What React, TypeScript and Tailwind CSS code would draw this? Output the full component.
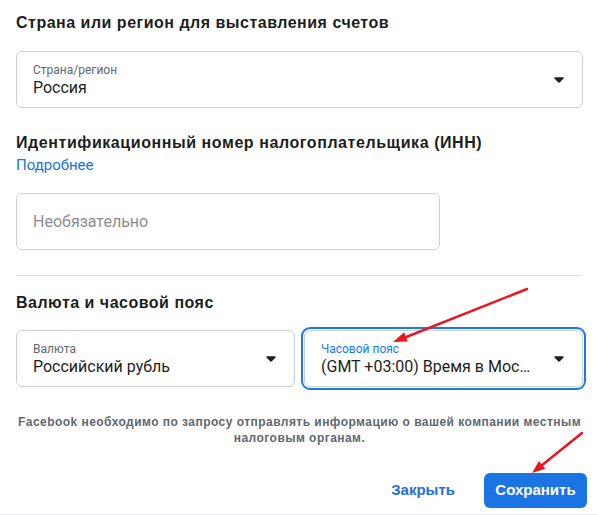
import React from 'react';

const Caret: React.FC = () => (
  <svg width="10" height="6" viewBox="0 0 10 6" className="shrink-0">
    <path d="M1 0.3h8a.8.8 0 0 1 .6 1.3L5.6 5.4a.8.8 0 0 1-1.2 0L.4 1.6A.8.8 0 0 1 1 .3z" fill="#1c1e21" />
  </svg>
);

interface SelectFieldProps {
  label: string;
  value: string;
  focused?: boolean;
}

const SelectField: React.FC<SelectFieldProps> = ({ label, value, focused }) => (
  <div
    className={`flex items-center h-[57px] rounded-[6px] border border-[#ccd0d5] bg-white pl-4 pr-[18px] ${
      focused ? 'outline-2 outline-offset-1 outline-[#1877f2]' : ''
    }`}
  >
    <div className="flex-1 min-w-0 pr-[18px]">
      <div className={`text-[12px] leading-[16px] ${focused ? 'text-[#1877f2]' : 'text-[#606770]'}`}>{label}</div>
      <div className="text-[16px] leading-[20px] text-[#1c1e21] truncate">{value}</div>
    </div>
    <Caret />
  </div>
);

const Arrows: React.FC = () => (
  <svg width="597" height="515" viewBox="0 0 597 515" className="absolute left-0 top-0 pointer-events-none">
    <line x1="527" y1="289" x2="405" y2="337.5" stroke="#e8161e" strokeWidth="2.5" strokeLinecap="round" />
    <polygon points="393,342 407.8,341.5 404.2,332.2" fill="#e8161e" />
    <line x1="582" y1="433" x2="541" y2="466" stroke="#e8161e" strokeWidth="2.5" strokeLinecap="round" />
    <polygon points="532,473 545.3,468.8 539,461" fill="#e8161e" />
  </svg>
);

const bold = "font-['Liberation_Sans',Arial,sans-serif] font-bold";

export default function App() {
  return (
    <div className="relative w-[597px] h-[515px] bg-white font-['Roboto','Liberation_Sans',sans-serif] text-[#1c1e21] border-b border-[#e4e6eb]">
      <div className="px-4 pt-[13px]">
        <h2 className={`${bold} text-[16px] leading-[20px] tracking-[0.5px]`}>Страна или регион для выставления счетов</h2>
        <div className="mt-[18px] w-[567px]">
          <SelectField label="Страна/регион" value="Россия" />
        </div>

        <h2 className={`${bold} mt-[25px] text-[16px] leading-[20px] tracking-[0.57px]`}>
          Идентификационный номер налогоплательщика (ИНН)
        </h2>
        <div className="mt-[2px] text-[15px] leading-[20px] text-[#216fdb]">Подробнее</div>
        <div className="mt-[18px] w-[424px] h-[57px] rounded-[6px] border border-[#ccd0d5] flex items-center px-4">
          <span className="text-[16px] text-[#8a8d91]">Необязательно</span>
        </div>

        <div className="mt-[25px] w-[567px] h-px bg-[#dadde1]" />

        <h2 className={`${bold} mt-[17px] text-[16px] leading-[20px] tracking-[0.5px]`}>Валюта и часовой пояс</h2>
        <div className="mt-[17px] w-[567px] grid grid-cols-2 gap-[9px]">
          <SelectField label="Валюта" value="Российский рубль" />
          <SelectField label="Часовой пояс" value="(GMT +03:00) Время в Москве" focused />
        </div>

        <p className={`${bold} mt-[27px] w-[567px] text-center text-[12px] leading-[16px] tracking-[0.46px] text-[#606770]`}>
          Facebook необходимо по запросу отправлять информацию о вашей компании местным налоговым органам.
        </p>
      </div>

      <div className="mt-[27px] flex justify-end items-center pr-[10px] gap-[29px]">
        <button className={`${bold} text-[15px] text-[#216fdb]`}>Закрыть</button>
        <button className={`${bold} h-[35px] w-[103px] rounded-[6px] bg-[#1b74e4] text-[15px] text-white`}>
          Сохранить
        </button>
      </div>

      <Arrows />
    </div>
  );
}
